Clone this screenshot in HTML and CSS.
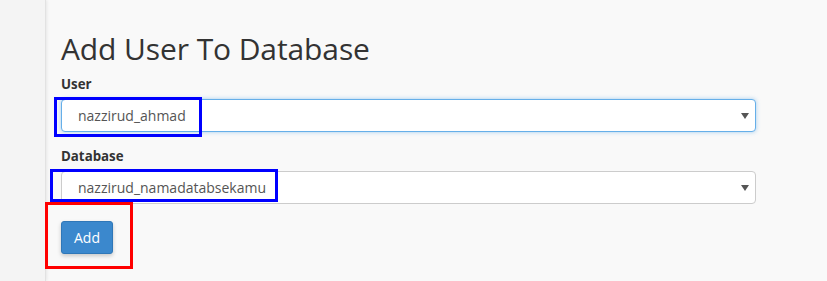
FILE: index.html
```html
<!DOCTYPE html>
<html lang="en">
<head>
    <meta charset="UTF-8">
    <title>Add User To Database</title>
    <link rel="stylesheet" href="styles.css">
</head>
<body>
    <div class="layout">
        <div class="sidebar"></div>
        <div class="main">
            <h1>Add User To Database</h1>

            <div class="form-group">
                <label for="user">User</label>
                <div class="select-wrap">
                    <div class="select focused" id="user">
                        <span>nazzirud_ahmad</span>
                        <span class="caret"></span>
                    </div>
                    <div class="mark mark-user"></div>
                </div>
            </div>

            <div class="form-group">
                <label for="db">Database</label>
                <div class="select-wrap">
                    <div class="select" id="db">
                        <span>nazzirud_namadatabsekamu</span>
                        <span class="caret"></span>
                    </div>
                    <div class="mark mark-db"></div>
                </div>
            </div>

            <div class="actions">
                <button class="btn">Add</button>
                <div class="mark mark-btn"></div>
            </div>
        </div>
    </div>
</body>
</html>
```

FILE: styles.css
```css
html, body {
    margin: 0;
    height: 100%;
}
body {
    font-family: "Open Sans", "Liberation Sans", sans-serif;
    background-color: #f9f9f9;
    color: #333;
}
.layout {
    display: flex;
    height: 281px;
}
.sidebar {
    width: 45px;
    background-color: #f4f4f4;
    border-right: 1px solid #e2e2e2;
    box-shadow: 1px 0 3px rgba(0,0,0,0.08);
}
.main {
    flex: 1;
    padding: 0 71px 0 15px;
}
h1 {
    font-size: 30px;
    font-weight: 400;
    margin: 28px 0 0 0;
    line-height: 42px;
    letter-spacing: -0.1px;
}
.form-group {
    margin-bottom: 15px;
}
.form-group label {
    display: block;
    font-size: 13.3px;
    font-weight: 700;
    line-height: 18px;
    margin: 5px 0 6px;
}
.select-wrap {
    position: relative;
}
.select {
    display: flex;
    align-items: center;
    justify-content: space-between;
    height: 31px;
    padding: 0 6px 0 16px;
    background: #fff;
    border: 1px solid #ccc;
    border-radius: 4px;
    font-size: 14px;
    color: #555;
}
.select.focused {
    border-color: #66afe9;
    box-shadow: 0 0 4px rgba(102,175,233,0.6);
}
.caret {
    width: 0;
    height: 0;
    border-left: 4px solid transparent;
    border-right: 4px solid transparent;
    border-top: 6px solid #555;
}
.actions {
    position: relative;
    padding-top: 2px;
}
.btn {
    background-color: #3b88cd;
    color: #fff;
    border: 1px solid #2f77b8;
    border-radius: 3px;
    font-family: inherit;
    font-size: 14px;
    width: 52px;
    height: 33px;
    box-shadow: 0 2px 4px rgba(0,0,0,0.2);
}
.mark {
    position: absolute;
    border: 3px solid #0000ff;
}
.mark-user {
    left: -7px;
    top: -2px;
    width: 142px;
    height: 34px;
}
.mark-db {
    left: -11px;
    top: -2px;
    width: 222px;
    height: 27px;
}
.mark-btn {
    border-color: #ff0000;
    left: -16px;
    top: -17px;
    width: 82px;
    height: 61px;
}
```
